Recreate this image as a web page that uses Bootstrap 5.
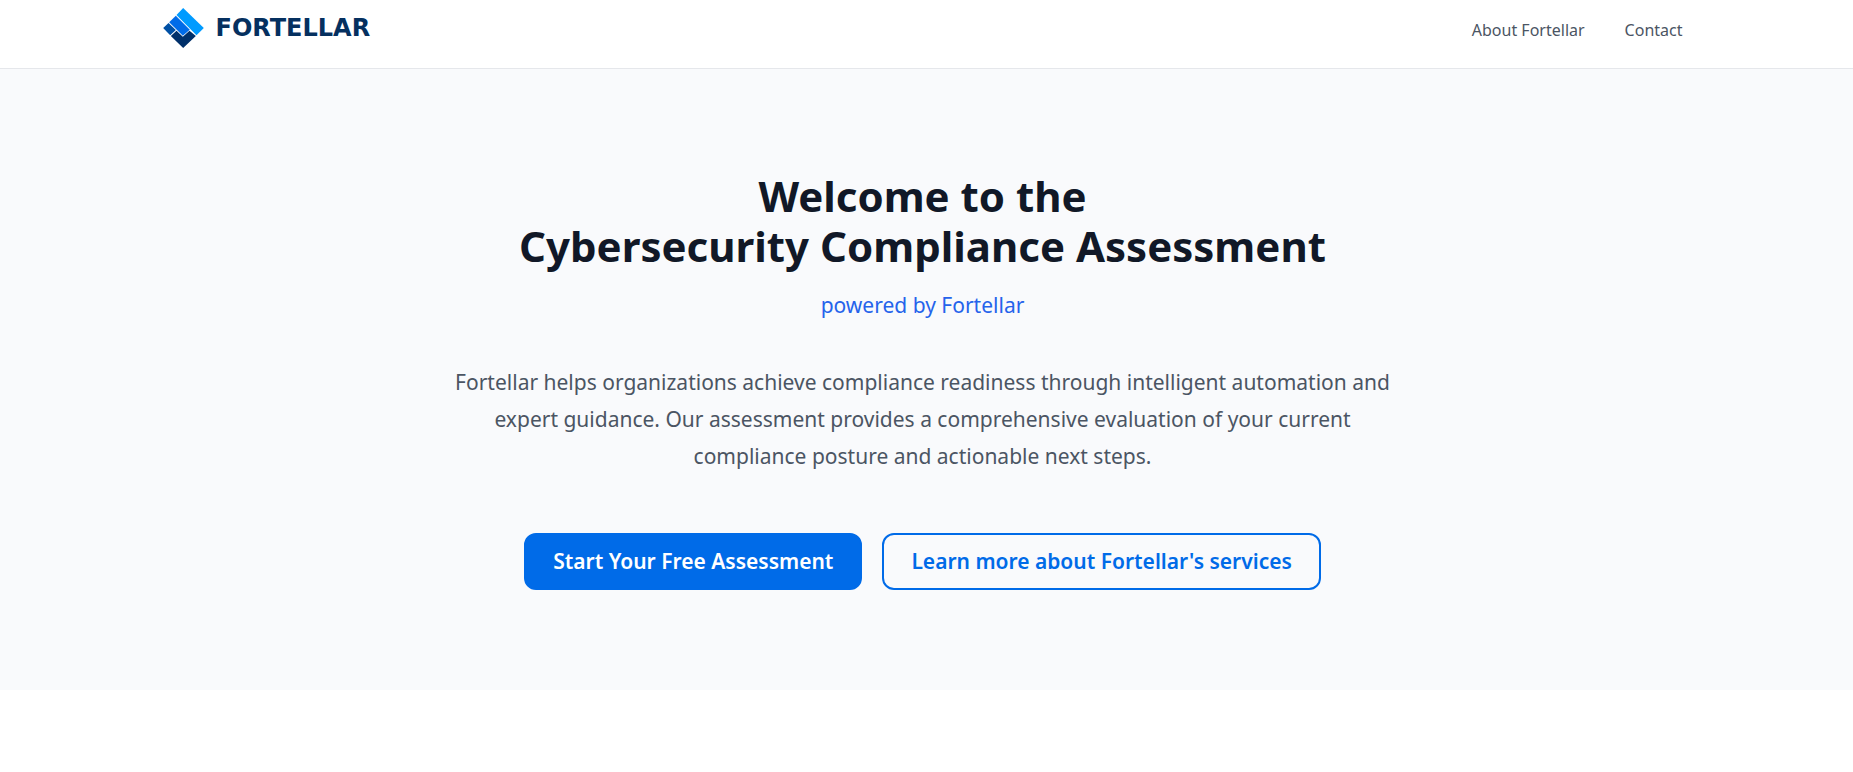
<!DOCTYPE html>
<html lang="en">
<head>
<meta charset="utf-8">
<meta name="viewport" content="width=device-width, initial-scale=1">
<title>Fortellar – Cybersecurity Compliance Assessment</title>
<link href="https://cdn.jsdelivr.net/npm/bootstrap@5.3.0/dist/css/bootstrap.min.css" rel="stylesheet">
<style>
  body { font-family: "Noto Sans", "Open Sans", sans-serif; background: #fff; }
  .site-header { border-bottom: 1px solid #e5e7eb; padding: 8px 8px 20px 0; }
  .header-inner { max-width: 1520px; }
  .brand-link { gap: 12px; }
  .brand-mark { width: 41px; height: 40px; }
  .brand-word { font-family: "DejaVu Sans", sans-serif; font-size: 24px; line-height: 40px; font-weight: 700; color: #05305f; }
  .site-nav { gap: 40px; }
  .site-nav .nav-link { font-size: 16px; line-height: 36px; color: #4b5563; }
  .hero { background: #f9fafc; padding: 102px 8px 100px 0; }
  .hero h1 { font-size: 42px; line-height: 50px; font-weight: 700; color: #111827; margin-bottom: 16px; }
  .hero-tagline { font-size: 21px; line-height: 37px; color: #2563eb; margin-bottom: 40px; }
  .hero-copy { font-size: 21px; line-height: 37px; color: #4b5563; max-width: 960px; margin-bottom: 58px; }
  .hero-actions { gap: 20px; }
  .hero .btn { font-size: 21px; line-height: 33px; font-weight: 600; padding: 10px 27px; border-width: 2px; border-radius: 12px; }
  .btn-brand { --bs-btn-color: #fff; --bs-btn-bg: #006be8; --bs-btn-border-color: #006be8; --bs-btn-hover-color: #fff; --bs-btn-hover-bg: #0058c0; --bs-btn-hover-border-color: #0058c0; }
  .btn-brand-outline { --bs-btn-color: #006be8; --bs-btn-border-color: #006be8; --bs-btn-hover-color: #fff; --bs-btn-hover-bg: #006be8; --bs-btn-hover-border-color: #006be8; }
</style>
</head>
<body>
<header class="site-header">
  <div class="header-inner container-fluid px-0 d-flex flex-wrap align-items-end justify-content-between">
    <a href="#" class="brand-link d-flex align-items-center text-decoration-none">
      <svg class="brand-mark" viewBox="0 0 122 120" aria-hidden="true">
        <path fill="#009bff" d="M60 0L122 60L100 82L40 21Z"/>
        <path fill="#006be8" d="M38 23L80 65L59 83L18 43Z"/>
        <path fill="#0050a5" d="M16 45L38 66L21 82L0 60Z"/>
        <path fill="#00306a" d="M40 68L59 86L79 68L98 84L60 120L23 84Z"/>
      </svg>
      <span class="brand-word">FORTELLAR</span>
    </a>
    <nav class="site-nav nav" aria-label="Main">
      <a class="nav-link p-0" href="#about">About Fortellar</a>
      <a class="nav-link p-0" href="#contact">Contact</a>
    </nav>
  </div>
</header>
<main>
  <section class="hero text-center">
    <h1>Welcome to the<br>Cybersecurity Compliance Assessment</h1>
    <p class="hero-tagline">powered by Fortellar</p>
    <p class="hero-copy mx-auto">Fortellar helps organizations achieve compliance readiness through intelligent automation and expert guidance. Our assessment provides a comprehensive evaluation of your current compliance posture and actionable next steps.</p>
    <div class="hero-actions d-flex flex-wrap justify-content-center">
      <button type="button" class="btn btn-brand">Start Your Free Assessment</button>
      <button type="button" class="btn btn-brand-outline">Learn more about Fortellar's services</button>
    </div>
  </section>
</main>
<script src="https://cdn.jsdelivr.net/npm/bootstrap@5.3.0/dist/js/bootstrap.bundle.min.js"></script>
</body>
</html>
